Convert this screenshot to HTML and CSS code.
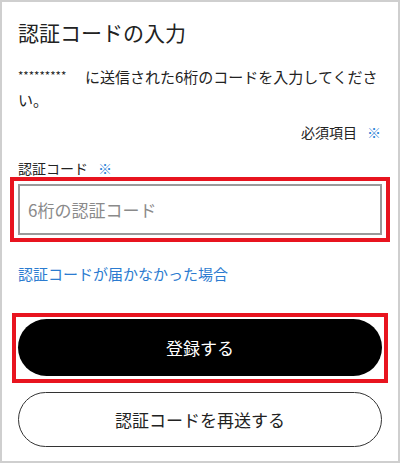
FILE: index.html
```html
<!DOCTYPE html>
<html lang="ja">
<head>
    <meta charset="UTF-8">
    <meta name="viewport" content="width=device-width, initial-scale=1.0">
    <title>認証コードの入力</title>
    <link rel="stylesheet" href="styles.css">
</head>
<body>
    <div class="frame">
        <h1 class="title">認証コードの入力</h1>

        <p class="lead"><span class="masked">*********</span>に送信された6桁のコードを入力してください。</p>

        <div class="required-note">必須項目<span class="mark">※</span></div>

        <form class="verify-form">
            <label class="field-label" for="code">認証コード<span class="mark">※</span></label>
            <div class="highlight field-highlight">
                <input type="text" id="code" name="code" class="code-input" placeholder="6桁の認証コード">
            </div>

            <a href="#" class="help-link">認証コードが届かなかった場合</a>

            <div class="highlight button-highlight">
                <button type="submit" class="btn btn-primary">登録する</button>
            </div>

            <button type="button" class="btn btn-outline">認証コードを再送する</button>
        </form>
    </div>
</body>
</html>
```

FILE: styles.css
```css
* {
    box-sizing: border-box;
}

body {
    margin: 0;
    font-family: "Noto Sans CJK JP", "Noto Sans", sans-serif;
    color: #222;
    background-color: #fff;
}

.frame {
    width: 400px;
    height: 463px;
    border: 2px solid #cfcfcf;
    padding: 15px 16px 0 16px;
    overflow: hidden;
}

.title {
    margin: 0;
    font-size: 21px;
    font-weight: 400;
    line-height: 30px;
}

.lead {
    margin: 18px 0 0 0;
    font-size: 15px;
    line-height: 23px;
}

.masked {
    float: left;
    width: 67px;
    font-size: 11.5px;
    line-height: 21px;
}

.required-note {
    margin-top: 11px;
    text-align: right;
    font-size: 14px;
    line-height: 20px;
    padding-right: 1px;
}

.mark {
    color: #2b7fd6;
    margin-left: 10px;
}

.verify-form {
    display: flex;
    flex-direction: column;
}

.field-label {
    margin-top: 17px;
    font-size: 14px;
    line-height: 18px;
}

.highlight {
    border: 4px solid #e8141f;
}

.field-highlight {
    margin: 0 -8px;
    padding: 3px 4px;
}

.code-input {
    display: block;
    width: 100%;
    height: 51px;
    border: 2px solid #9a9a9a;
    border-radius: 0;
    padding: 0 8px;
    font-family: inherit;
    font-size: 17px;
    color: #222;
    outline: none;
}

.code-input::placeholder {
    color: #8a8a8a;
}

.help-link {
    margin-top: 22px;
    font-size: 15px;
    line-height: 20px;
    color: #2b7bd0;
    text-decoration: none;
}

.button-highlight {
    margin: 29px -6px 0 -6px;
    padding: 2px 2px 3px 2px;
}

.btn {
    display: block;
    width: 100%;
    border-radius: 30px;
    font-family: inherit;
    font-size: 17px;
    cursor: pointer;
}

.btn-primary {
    height: 57px;
    background-color: #000;
    color: #fff;
    border: none;
}

.btn-outline {
    margin-top: 9px;
    height: 55px;
    background-color: #fff;
    color: #222;
    border: 1.5px solid #333;
}
```
